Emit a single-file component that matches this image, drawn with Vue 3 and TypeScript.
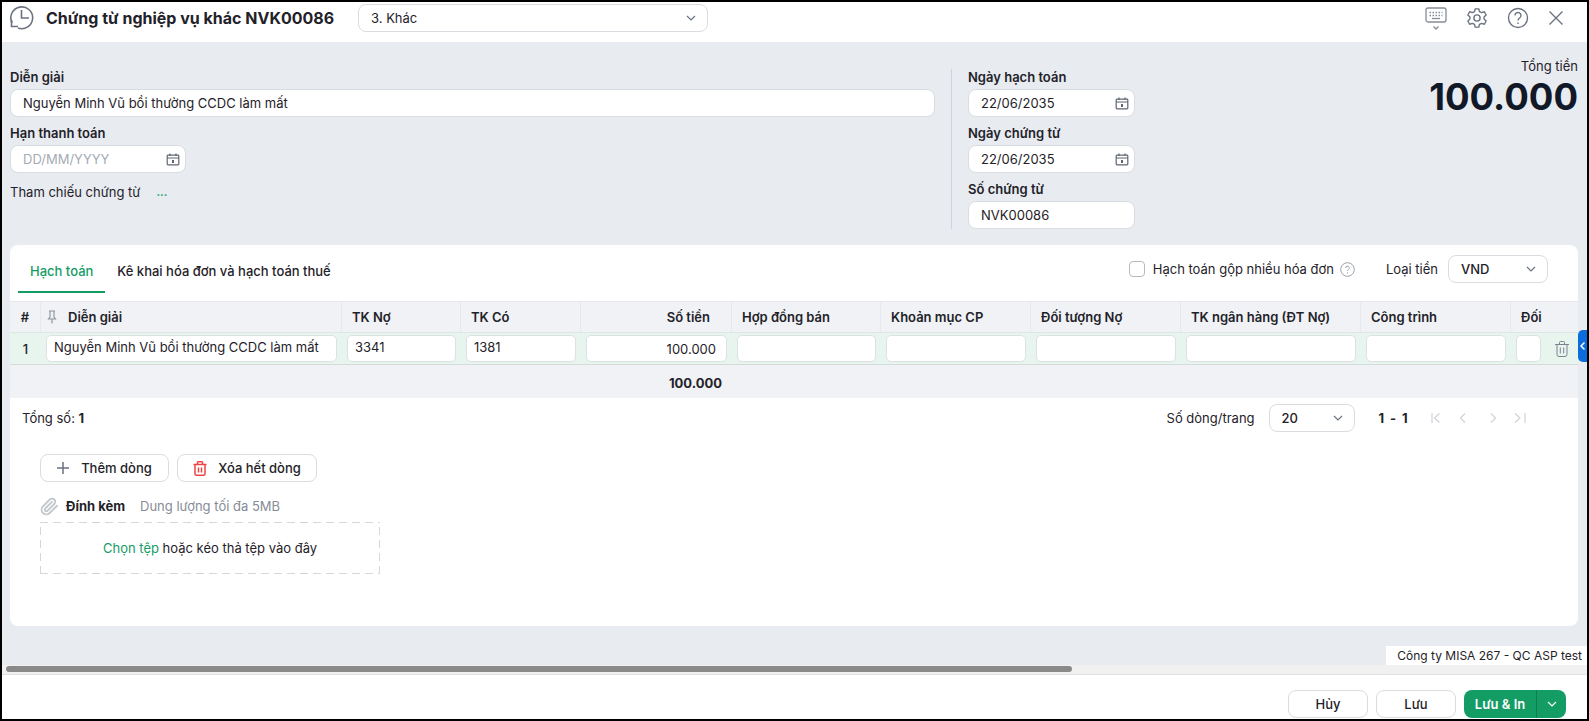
<script setup lang="ts">
interface Column {
  title: string
  width: number
  value?: string
  right?: boolean
}

// độ rộng cột lấy từ ảnh, cột "Đối" bị cắt bởi cột xóa
const columns: Column[] = [
  { title: 'TK Nợ', width: 119, value: '3341' },
  { title: 'TK Có', width: 120, value: '1381' },
  { title: 'Số tiền', width: 151, value: '100.000', right: true },
  { title: 'Hợp đồng bán', width: 149 },
  { title: 'Khoản mục CP', width: 150 },
  { title: 'Đối tượng Nợ', width: 150 },
  { title: 'TK ngân hàng (ĐT Nợ)', width: 180 },
  { title: 'Công trình', width: 150 },
  { title: 'Đối', width: 35 },
]

const description = 'Nguyễn Minh Vũ bồi thường CCDC làm mất'
const gridTemplate = `31px 301px ${columns.map((c) => c.width + 'px').join(' ')} 32px`
</script>

<template>
  <div class="page">
    <svg class="defs" width="0" height="0">
      <symbol id="calendar" viewBox="0 0 14 14">
        <path d="M2 3.2h10a.8.8 0 0 1 .8.8v8a.8.8 0 0 1-.8.8H2a.8.8 0 0 1-.8-.8V4a.8.8 0 0 1 .8-.8zM1.2 6h11.6M4 1.4v2.6M10 1.4v2.6" fill="none" stroke="currentColor" stroke-width="1.2" />
        <rect x="6" y="8" width="2" height="3" fill="currentColor" />
      </symbol>
      <symbol id="chevron" viewBox="0 0 12 12">
        <path d="M2 4l4 4 4-4" fill="none" stroke="currentColor" stroke-width="1.2" />
      </symbol>
    </svg>

    <header class="header">
      <svg class="history" width="24" height="24" viewBox="0 0 24 24" fill="none" stroke="#6b7280" stroke-width="1.6">
        <path d="M2.200 17A10.900 10.900 0 1 1 8 22" />
        <path d="M11.500 4v8H19" />
        <path d="M1.500 14v6.500H8" />
      </svg>
      <h1 class="title">Chứng từ nghiệp vụ khác NVK00086</h1>
      <div class="box header-select">
        <span>3. Khác</span>
        <svg class="chev" width="12" height="12"><use href="#chevron" /></svg>
      </div>
      <div class="header-icons">
        <svg width="22" height="26" viewBox="0 0 22 26" fill="none" stroke="#868c96" stroke-width="1.3">
          <rect x="1" y="3" width="20" height="14" rx="2" />
          <path d="M4.500 7.500h13M4.500 10.500h13" stroke-dasharray="1.500 1.500" />
          <path d="M7 13.500h8" />
          <path d="M8.500 21.500l2.500 2.500 2.500-2.500" />
        </svg>
        <svg width="22" height="22" viewBox="0 0 24 24" fill="none" stroke="#6b7280" stroke-width="1.5">
          <circle cx="12" cy="12" r="3.400" />
          <path d="M10 2h4l.7 3 2.400 1.200 2.900-1 2 3.500-2.300 2.100v2.400l2.300 2.100-2 3.500-2.900-1-2.400 1.200-.7 3h-4l-.7-3-2.400-1.200-2.900 1-2-3.500 2.300-2.100v-2.400L2 8.700l2-3.500 2.900 1 2.400-1.200z" stroke-linejoin="round" />
        </svg>
        <svg width="22" height="22" viewBox="0 0 22 22" fill="none" stroke="#6b7280" stroke-width="1.4">
          <circle cx="11" cy="11" r="9.500" />
          <path d="M8 8.500a3 3 0 1 1 4.600 2.500c-1 .7-1.600 1.200-1.600 2.500" />
          <path d="M11 15.500v1.500" />
        </svg>
        <svg width="16" height="16" viewBox="0 0 16 16" fill="none" stroke="#6b7280" stroke-width="1.4">
          <path d="M1.500 1.500l13 13M14.500 1.500l-13 13" />
        </svg>
      </div>
    </header>

    <main class="content">
      <section class="form">
        <div class="form-left">
          <div class="field">
            <label>Diễn giải</label>
            <div class="box">{{ description }}</div>
          </div>
          <div class="field">
            <label>Hạn thanh toán</label>
            <div class="box date-short placeholder">
              <span>DD/MM/YYYY</span>
              <svg class="cal" width="14" height="14"><use href="#calendar" /></svg>
            </div>
          </div>
          <div class="reference">
            <span>Tham chiếu chứng từ</span>
            <b class="dots">...</b>
          </div>
        </div>

        <div class="form-right">
          <div class="field">
            <label>Ngày hạch toán</label>
            <div class="box">
              <span>22/06/2035</span>
              <svg class="cal" width="14" height="14"><use href="#calendar" /></svg>
            </div>
          </div>
          <div class="field">
            <label>Ngày chứng từ</label>
            <div class="box">
              <span>22/06/2035</span>
              <svg class="cal" width="14" height="14"><use href="#calendar" /></svg>
            </div>
          </div>
          <div class="field last">
            <label>Số chứng từ</label>
            <div class="box">NVK00086</div>
          </div>
        </div>

        <div class="total">
          <div class="total-label">Tổng tiền</div>
          <div class="total-value">100.000</div>
        </div>
      </section>

      <section class="card">
        <div class="tabbar">
          <div class="tab active">Hạch toán</div>
          <div class="tab">Kê khai hóa đơn và hạch toán thuế</div>
          <div class="tab-tools">
            <span class="check"></span>
            <span>Hạch toán gộp nhiều hóa đơn</span>
            <svg class="help" width="15" height="15" viewBox="0 0 15 15" fill="none" stroke="#9aa1ac">
              <circle cx="7.500" cy="7.500" r="6.800" />
              <path d="M5.700 6a1.800 1.800 0 1 1 2.700 1.500c-.6.400-.9.700-.9 1.400M7.500 10.300v1" />
            </svg>
            <span class="currency-label">Loại tiền</span>
            <div class="box small-select currency">
              <span>VND</span>
              <svg class="chev" width="12" height="12"><use href="#chevron" /></svg>
            </div>
          </div>
        </div>

        <div class="table">
          <div class="row head" :style="{ gridTemplateColumns: gridTemplate }">
            <div class="cell num">#</div>
            <div class="cell pin-cell">
              <svg width="12" height="14" viewBox="0 0 12 14" fill="none" stroke="#8a919c" stroke-width="1.100">
                <path d="M3 1h6M4 1v6L2.500 9h7L8 7V1M6 9v4.500" />
              </svg>
              <span>Diễn giải</span>
            </div>
            <div v-for="col in columns" :key="col.title" class="cell" :class="{ right: col.right }">
              {{ col.title }}
            </div>
            <div class="cell"></div>
          </div>

          <div class="row body" :style="{ gridTemplateColumns: gridTemplate }">
            <div class="cell num">1</div>
            <div class="cell"><div class="cell-input">{{ description }}</div></div>
            <div v-for="col in columns" :key="col.title" class="cell">
              <div class="cell-input" :class="{ right: col.right }">{{ col.value }}</div>
            </div>
            <div class="cell trash-cell">
              <svg width="16" height="18" viewBox="0 0 16 18" fill="none" stroke="#7b828e">
                <path d="M1 4.500h14M5.500 4V2.500a1 1 0 0 1 1-1h3a1 1 0 0 1 1 1V4M3 4.500v10a2 2 0 0 0 2 2h6a2 2 0 0 0 2-2v-10M6.300 7.500v6M9.700 7.500v6" />
              </svg>
            </div>
          </div>

          <div class="row sum" :style="{ gridTemplateColumns: gridTemplate }">
            <div class="sum-value">100.000</div>
          </div>
        </div>

        <div class="pager">
          <div>Tổng số: <b>1</b></div>
          <div class="pager-right">
            <span>Số dòng/trang</span>
            <div class="box small-select size">
              <span>20</span>
              <svg class="chev" width="12" height="12"><use href="#chevron" /></svg>
            </div>
            <b class="range">1 - 1</b>
            <svg class="pager-icons" width="95" height="12" viewBox="0 0 95 12" fill="none" stroke="#cfd2d8" stroke-width="1.200">
              <path d="M1 1v10M8.500 1.500L3.500 6l5 4.500" />
              <path d="M34 1.500L29.500 6l4.500 4.500" />
              <path d="M60 1.500L64.500 6 60 10.500" />
              <path d="M84 1.500L89 6l-5 4.500M94 1v10" />
            </svg>
          </div>
        </div>

        <div class="actions">
          <button class="btn add">
            <svg width="12" height="12" viewBox="0 0 12 12" stroke="#6b7280" stroke-width="1.500"><path d="M6 0v12M0 6h12" /></svg>
            Thêm dòng
          </button>
          <button class="btn remove">
            <svg width="14" height="15" viewBox="0 0 14 15" fill="none" stroke="#ef4444" stroke-width="1.500">
              <path d="M.5 3.500h13M4.500 3.500V1.500a.8.8 0 0 1 .8-.8h3.400a.8.8 0 0 1 .8.8v2M2 3.500v9.200a1.600 1.600 0 0 0 1.600 1.600h6.800a1.600 1.600 0 0 0 1.600-1.600V3.500M5.500 6.500v5M8.500 6.500v5" />
            </svg>
            Xóa hết dòng
          </button>
        </div>

        <div class="attach-head">
          <svg width="19" height="19" viewBox="0 0 24 24" fill="none" stroke="#c4c8ce" stroke-width="2.400" stroke-linecap="round">
            <path d="M21.440 11.050l-9.190 9.190a6 6 0 0 1-8.490-8.490l8.570-8.570A4 4 0 1 1 18 8.840l-8.590 8.570a2 2 0 0 1-2.830-2.830l8.490-8.480" />
          </svg>
          <b>Đính kèm</b>
          <span class="muted">Dung lượng tối đa 5MB</span>
        </div>
        <div class="dropzone"><span class="link">Chọn tệp</span>&nbsp;hoặc kéo thả tệp vào đây</div>
      </section>

      <div class="company">Công ty MISA 267 - QC ASP test</div>
      <div class="side-tab">
        <svg width="5" height="8" viewBox="0 0 5 8" fill="none" stroke="#fff" stroke-width="1.500"><path d="M4.500 .5L1 4l3.500 3.500" /></svg>
      </div>
    </main>

    <div class="scrollbar"><div class="thumb"></div></div>

    <footer class="footer">
      <button class="btn foot">Hủy</button>
      <button class="btn foot">Lưu</button>
      <div class="save-print">
        <span class="save-label">Lưu &amp; In</span>
        <span class="save-arrow">
          <svg width="12" height="12" class="white-chev"><use href="#chevron" /></svg>
        </span>
      </div>
    </footer>
  </div>
</template>

<style>
html,
body {
  margin: 0;
  padding: 0;
  overflow: hidden;
}
</style>

<style scoped>
.page {
  box-sizing: border-box;
  width: 1589px;
  height: 721px;
  border: 2px solid #000;
  display: flex;
  flex-direction: column;
  font-family: Inter, "Liberation Sans", sans-serif;
  font-size: 13px;
  color: #1f2229;
  background: #fff;
  overflow: hidden;
}

.defs {
  position: absolute;
}

.header {
  box-sizing: border-box;
  height: 40px;
  flex: none;
  display: flex;
  align-items: center;
  padding: 0 0 9px 8px;
}

.title {
  margin: 0 0 0 12px;
  width: 312px;
  font-size: 16px;
  font-weight: 700;
  white-space: nowrap;
}

.header-select {
  width: 350px;
}

.header-icons {
  margin-left: auto;
  display: flex;
  align-items: center;
  gap: 19px;
  padding-right: 23px;
}

.box {
  box-sizing: border-box;
  height: 28px;
  display: flex;
  align-items: center;
  justify-content: space-between;
  padding: 0 5px 0 12px;
  background: #fff;
  border: 1px solid #d9dce1;
  border-radius: 8px;
  white-space: nowrap;
}

.chev {
  color: #6b7280;
  margin-right: 5px;
}

.cal {
  color: #5f6671;
}

.content {
  position: relative;
  flex: 1;
  min-height: 0;
  background: #e8ebf0;
  padding: 27px 9px 0 8px;
}

.form {
  display: flex;
  height: 160px;
}

.form-left {
  width: 925px;
  flex: none;
}

.form-right {
  width: 184px;
  flex: none;
  margin-left: 16px;
  padding-left: 16px;
  box-sizing: border-box;
  border-left: 1px solid #d0d4da;
}

.field {
  margin-bottom: 8px;
}

.field.last {
  margin-bottom: 0;
}

.field label {
  display: block;
  height: 17px;
  line-height: 16px;
  margin-bottom: 3px;
  font-weight: 600;
}

.date-short {
  width: 176px;
}

.placeholder {
  color: #a6abb4;
}

.reference {
  margin-top: 8px;
  display: flex;
  gap: 16px;
  line-height: 22px;
}

.dots {
  color: #149c65;
  font-size: 11px;
  font-weight: 700;
}

.total {
  flex: 1;
  text-align: right;
  margin-top: -12px;
}

.total-label {
  line-height: 18px;
  margin-bottom: 3px;
}

.total-value {
  font-size: 36.5px;
  font-weight: 700;
  line-height: 38px;
  color: #111827;
}

.card {
  margin-top: 16px;
  height: 381px;
  background: #fff;
  border-radius: 8px;
  overflow: hidden;
}

.tabbar {
  height: 56px;
  box-sizing: border-box;
  display: flex;
  align-items: flex-start;
  padding-left: 8px;
}

.tab {
  height: 46px;
  line-height: 52px;
  padding: 0 12px;
  font-weight: 500;
  white-space: nowrap;
}

.tab.active {
  color: #149c65;
  border-bottom: 2px solid #149c65;
}

.tab-tools {
  margin-left: auto;
  height: 48px;
  display: flex;
  align-items: center;
  padding-right: 30px;
}

.check {
  box-sizing: border-box;
  width: 16px;
  height: 16px;
  margin-right: 8px;
  border: 1px solid #b5bac2;
  border-radius: 4px;
}

.help {
  margin-left: 6px;
}

.currency-label {
  margin-left: 31px;
}

.small-select {
  margin-left: 10px;
}

.currency {
  width: 100px;
  font-weight: 500;
}

.table {
  background: #f0f2f5;
}

.row {
  display: grid;
}

.head {
  height: 31px;
  font-weight: 600;
  border-top: 1px solid #e6e8ec;
  box-sizing: border-box;
}

.head .cell {
  display: flex;
  align-items: center;
  padding-left: 10px;
  border-right: 1px solid #e6e8ec;
}

.head .cell.right {
  justify-content: flex-end;
  padding-right: 21px;
}

.head .num {
  padding-left: 0;
  justify-content: center;
}

.head .pin-cell {
  padding-left: 5px;
  gap: 10px;
}

.head .cell:nth-last-child(2),
.head .cell:last-child {
  border-right: none;
}

.body {
  height: 33px;
  box-sizing: border-box;
  background: #e8f5ef;
  border-top: 1px solid #dfe7e3;
  border-bottom: 1px solid #d5dbd8;
}

.body .cell {
  display: flex;
  align-items: center;
  padding: 0 5px;
  min-width: 0;
  overflow: hidden;
}

.body .num {
  justify-content: center;
  padding: 0;
  font-weight: 500;
}

.cell-input {
  box-sizing: border-box;
  width: 100%;
  height: 27px;
  flex: none;
  line-height: 22px;
  padding: 0 7px;
  background: #fff;
  border: 1px solid #dde1e5;
  border-radius: 5px;
  white-space: nowrap;
}

.cell-input.right {
  text-align: right;
  line-height: 27px;
  padding-right: 10px;
}

.body .trash-cell {
  background: #e8f5ef;
  justify-content: center;
  padding: 0;
}

.sum {
  height: 33px;
  align-items: center;
}

.sum-value {
  margin-left: 659px;
  padding-top: 3px;
  font-weight: 700;
}

.pager {
  display: flex;
  align-items: center;
  justify-content: space-between;
  height: 40px;
  padding: 0 52px 0 12px;
}

.pager-right {
  display: flex;
  align-items: center;
}

.size {
  width: 86px;
  font-weight: 500;
  margin-left: 14px;
}

.range {
  margin-left: 24px;
  font-weight: 700;
  letter-spacing: 1.4px;
}

.pager-icons {
  margin-left: 22px;
}

.actions {
  display: flex;
  gap: 8px;
  padding: 16px 0 0 30px;
}

.btn {
  box-sizing: border-box;
  height: 28px;
  display: flex;
  align-items: center;
  justify-content: center;
  background: #fff;
  border: 1px solid #d9dce1;
  border-radius: 8px;
  font: 500 13px Inter, "Liberation Sans", sans-serif;
  color: #1f2229;
}

.add {
  width: 129px;
  gap: 12px;
}

.remove {
  width: 140px;
  gap: 11px;
}

.attach-head {
  display: flex;
  align-items: center;
  height: 20px;
  margin-top: 14px;
  padding-left: 30px;
}

.attach-head b {
  margin-left: 7px;
  font-weight: 700;
}

.muted {
  margin-left: 15px;
  color: #868c96;
}

.dropzone {
  box-sizing: border-box;
  width: 340px;
  height: 52px;
  margin: 6px 0 0 30px;
  display: flex;
  align-items: center;
  justify-content: center;
  background:
    repeating-linear-gradient(90deg, #d5d7db 0 8px, transparent 8px 13px) top / 100% 1px no-repeat,
    repeating-linear-gradient(90deg, #d5d7db 0 8px, transparent 8px 13px) bottom / 100% 1px no-repeat,
    repeating-linear-gradient(0deg, #d5d7db 0 8px, transparent 8px 13px) left / 1px 100% no-repeat,
    repeating-linear-gradient(0deg, #d5d7db 0 8px, transparent 8px 13px) right / 1px 100% no-repeat;
}

.link {
  color: #149c65;
}

.company {
  position: absolute;
  right: 0;
  bottom: 0;
  box-sizing: border-box;
  width: 201px;
  height: 19px;
  line-height: 19px;
  padding-right: 5px;
  font-size: 12px;
  text-align: right;
  background: #fff;
  white-space: nowrap;
}

.side-tab {
  position: absolute;
  right: 0;
  top: 288px;
  width: 9px;
  height: 32px;
  display: flex;
  align-items: center;
  justify-content: center;
  background: #0a6ddb;
  border-radius: 5px 0 0 5px;
}

.scrollbar {
  flex: none;
  height: 10px;
  box-sizing: border-box;
  padding: 1px 0 0 4px;
  background: #f1f1f1;
  border-bottom: 1px solid #dfe1e4;
}

.thumb {
  width: 1066px;
  height: 6px;
  background: #8a8a8a;
  border-radius: 3px;
}

.footer {
  flex: none;
  height: 44px;
  box-sizing: border-box;
  display: flex;
  justify-content: flex-end;
  align-items: flex-end;
  gap: 8px;
  padding: 0 21px 1px 0;
}

.foot {
  width: 80px;
}

.save-print {
  width: 102px;
  height: 28px;
  display: flex;
  background: #149c65;
  border-radius: 8px;
  color: #fff;
  font-weight: 600;
}

.save-label {
  flex: 1;
  display: flex;
  align-items: center;
  justify-content: center;
  border-right: 1px solid #0f7f51;
}

.save-arrow {
  width: 29px;
  display: flex;
  align-items: center;
  justify-content: center;
}

.white-chev {
  color: #fff;
}
</style>
